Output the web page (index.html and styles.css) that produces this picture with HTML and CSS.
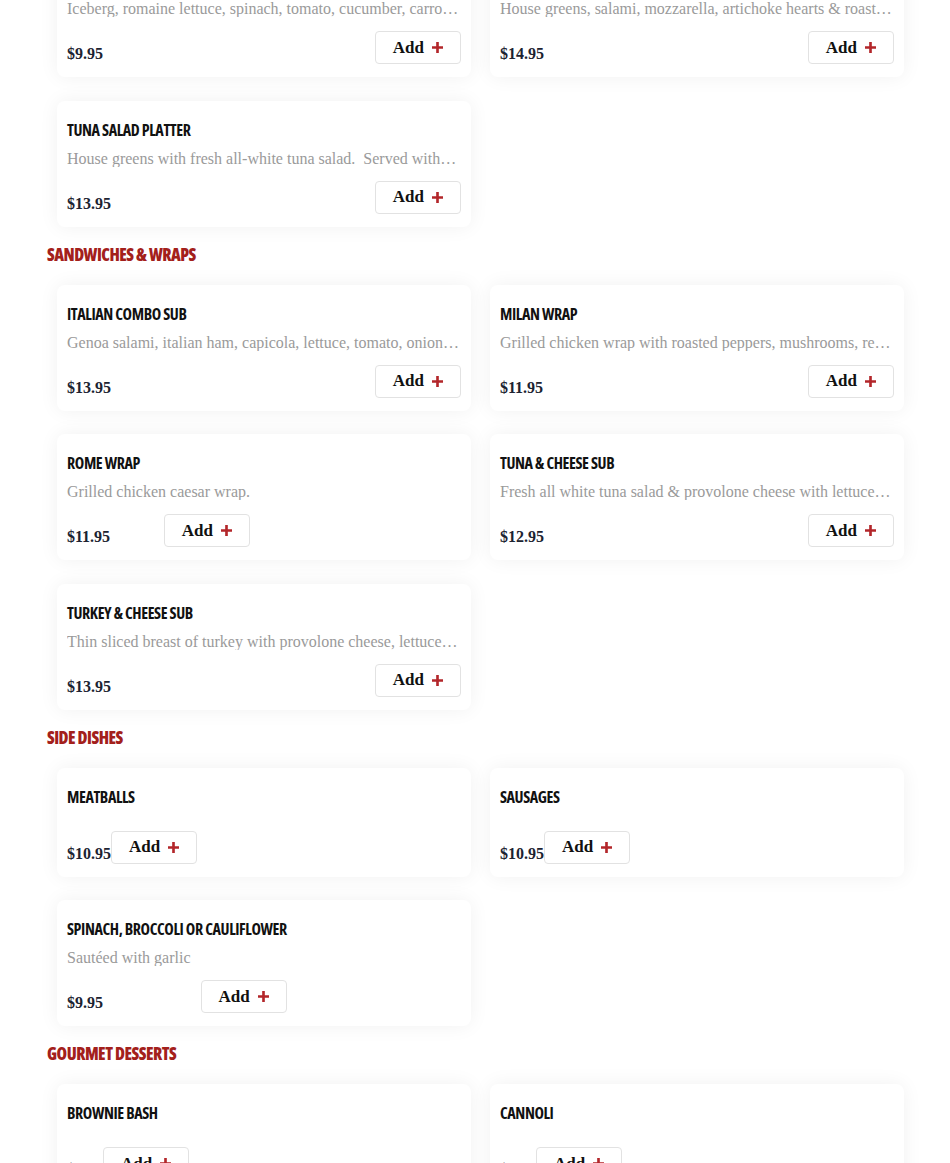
FILE: index.html
```html
<!DOCTYPE html>
<html lang="en">
<head>
    <meta charset="UTF-8">
    <meta name="viewport" content="width=device-width, initial-scale=1.0">
    <title>Menu</title>
    <link rel="stylesheet" href="styles.css">
</head>
<body>
    <div class="menu">
        <section class="menu-section">
            <h2 class="section-title">Salads</h2>
            <div class="item-grid">
                <div class="item-card">
                    <div class="item-body">
                        <h3 class="item-name">Garden Salad</h3>
                        <p class="item-desc">Iceberg, romaine lettuce, spinach, tomato, cucumber, carrots, red onion &amp; croutons.</p>
                        <div class="item-foot">
                            <span class="item-price">$9.95</span>
                            <button class="add-btn">Add <svg viewBox="0 0 10 10"><path d="M5 0v10M0 5h10"/></svg></button>
                        </div>
                    </div>
                </div>
                <div class="item-card">
                    <div class="item-body">
                        <h3 class="item-name">Antipasto Salad</h3>
                        <p class="item-desc">House greens, salami, mozzarella, artichoke hearts &amp; roasted peppers with olives.</p>
                        <div class="item-foot">
                            <span class="item-price">$14.95</span>
                            <button class="add-btn">Add <svg viewBox="0 0 10 10"><path d="M5 0v10M0 5h10"/></svg></button>
                        </div>
                    </div>
                </div>
                <div class="item-card">
                    <div class="item-body">
                        <h3 class="item-name">Tuna Salad Platter</h3>
                        <p class="item-desc">House greens with fresh all-white tuna salad.&nbsp; Served with tomato, cucumber &amp; carrots.</p>
                        <div class="item-foot">
                            <span class="item-price">$13.95</span>
                            <button class="add-btn">Add <svg viewBox="0 0 10 10"><path d="M5 0v10M0 5h10"/></svg></button>
                        </div>
                    </div>
                </div>
            </div>
        </section>

        <section class="menu-section">
            <h2 class="section-title">Sandwiches &amp; Wraps</h2>
            <div class="item-grid">
                <div class="item-card">
                    <div class="item-body">
                        <h3 class="item-name">Italian Combo Sub</h3>
                        <p class="item-desc">Genoa salami, italian ham, capicola, lettuce, tomato, onion, provolone &amp; italian dressing.</p>
                        <div class="item-foot">
                            <span class="item-price">$13.95</span>
                            <button class="add-btn">Add <svg viewBox="0 0 10 10"><path d="M5 0v10M0 5h10"/></svg></button>
                        </div>
                    </div>
                </div>
                <div class="item-card">
                    <div class="item-body">
                        <h3 class="item-name">Milan Wrap</h3>
                        <p class="item-desc">Grilled chicken wrap with roasted peppers, mushrooms, red onion &amp; mozzarella.</p>
                        <div class="item-foot">
                            <span class="item-price">$11.95</span>
                            <button class="add-btn">Add <svg viewBox="0 0 10 10"><path d="M5 0v10M0 5h10"/></svg></button>
                        </div>
                    </div>
                </div>
                <div class="item-card">
                    <div class="item-body">
                        <h3 class="item-name">Rome Wrap</h3>
                        <p class="item-desc">Grilled chicken caesar wrap.</p>
                        <div class="item-foot">
                            <span class="item-price">$11.95</span>
                            <button class="add-btn">Add <svg viewBox="0 0 10 10"><path d="M5 0v10M0 5h10"/></svg></button>
                        </div>
                    </div>
                </div>
                <div class="item-card">
                    <div class="item-body">
                        <h3 class="item-name">Tuna &amp; Cheese Sub</h3>
                        <p class="item-desc">Fresh all white tuna salad &amp; provolone cheese with lettuce, tomato &amp; onion.</p>
                        <div class="item-foot">
                            <span class="item-price">$12.95</span>
                            <button class="add-btn">Add <svg viewBox="0 0 10 10"><path d="M5 0v10M0 5h10"/></svg></button>
                        </div>
                    </div>
                </div>
                <div class="item-card">
                    <div class="item-body">
                        <h3 class="item-name">Turkey &amp; Cheese Sub</h3>
                        <p class="item-desc">Thin sliced breast of turkey with provolone cheese, lettuce, tomato &amp; mayo.</p>
                        <div class="item-foot">
                            <span class="item-price">$13.95</span>
                            <button class="add-btn">Add <svg viewBox="0 0 10 10"><path d="M5 0v10M0 5h10"/></svg></button>
                        </div>
                    </div>
                </div>
            </div>
        </section>

        <section class="menu-section">
            <h2 class="section-title">Side Dishes</h2>
            <div class="item-grid">
                <div class="item-card">
                    <div class="item-body">
                        <h3 class="item-name">Meatballs</h3>
                        <div class="item-foot">
                            <span class="item-price">$10.95</span>
                            <button class="add-btn">Add <svg viewBox="0 0 10 10"><path d="M5 0v10M0 5h10"/></svg></button>
                        </div>
                    </div>
                </div>
                <div class="item-card">
                    <div class="item-body">
                        <h3 class="item-name">Sausages</h3>
                        <div class="item-foot">
                            <span class="item-price">$10.95</span>
                            <button class="add-btn">Add <svg viewBox="0 0 10 10"><path d="M5 0v10M0 5h10"/></svg></button>
                        </div>
                    </div>
                </div>
                <div class="item-card">
                    <div class="item-body">
                        <h3 class="item-name">Spinach, Broccoli or Cauliflower</h3>
                        <p class="item-desc">Sautéed with garlic</p>
                        <div class="item-foot">
                            <span class="item-price">$9.95</span>
                            <button class="add-btn">Add <svg viewBox="0 0 10 10"><path d="M5 0v10M0 5h10"/></svg></button>
                        </div>
                    </div>
                </div>
            </div>
        </section>

        <section class="menu-section">
            <h2 class="section-title">Gourmet Desserts</h2>
            <div class="item-grid">
                <div class="item-card">
                    <div class="item-body">
                        <h3 class="item-name">Brownie Bash</h3>
                        <div class="item-foot">
                            <span class="item-price">$6.95</span>
                            <button class="add-btn">Add <svg viewBox="0 0 10 10"><path d="M5 0v10M0 5h10"/></svg></button>
                        </div>
                    </div>
                </div>
                <div class="item-card">
                    <div class="item-body">
                        <h3 class="item-name">Cannoli</h3>
                        <div class="item-foot">
                            <span class="item-price">$4.95</span>
                            <button class="add-btn">Add <svg viewBox="0 0 10 10"><path d="M5 0v10M0 5h10"/></svg></button>
                        </div>
                    </div>
                </div>
            </div>
        </section>
    </div>
</body>
</html>
```

FILE: styles.css
```css
body {
    margin: 0;
    background: #fff;
    font-family: "Liberation Serif", serif;
    color: #111;
}
.menu {
    width: 867px;
    margin: -107px 0 0 47px;
}
.section-title {
    margin: 16px 0 18px;
    font-family: "Open Sans", sans-serif;
    font-stretch: 75%;
    font-size: 17px;
    line-height: 24px;
    font-weight: 800;
    letter-spacing: -0.5px;
    text-transform: uppercase;
    color: #a3201b;
}
.item-grid {
    display: grid;
    grid-template-columns: 1fr 1fr;
    column-gap: 19px;
    row-gap: 23.5px;
    padding: 0 10px;
}
.item-card {
    background: #fff;
    border-radius: 8px;
    padding: 19px 10px 13px;
    box-shadow: 0 0 20px rgba(0,0,0,0.06);
}
.item-body {
    display: inline-flex;
    flex-direction: column;
    max-width: 100%;
}
.item-name {
    margin: 0 0 10px;
    font-family: "Open Sans", sans-serif;
    font-stretch: 75%;
    font-size: 16px;
    line-height: 20px;
    font-weight: 700;
    letter-spacing: -0.4px;
    text-transform: uppercase;
    color: #111;
}
.item-desc {
    margin: 0;
    font-size: 16px;
    line-height: 17px;
    color: #9a9a9a;
    display: -webkit-box;
    -webkit-line-clamp: 1;
    -webkit-box-orient: vertical;
    overflow: hidden;
}
.item-foot {
    display: flex;
    justify-content: space-between;
    align-items: flex-end;
    margin-top: 14px;
}
.item-price {
    font-size: 16px;
    line-height: 20px;
    font-weight: 700;
    color: #1c2331;
}
.add-btn {
    display: flex;
    align-items: center;
    gap: 8px;
    height: 33px;
    padding: 0 17px;
    background: #fff;
    border: 1px solid #e2e2e2;
    border-radius: 4px;
    font-family: "Liberation Serif", serif;
    font-size: 17px;
    font-weight: 700;
    color: #111;
    cursor: pointer;
}
.add-btn svg {
    width: 11px;
    height: 11px;
    stroke: #b3262a;
    stroke-width: 2.4;
    fill: none;
}
```
